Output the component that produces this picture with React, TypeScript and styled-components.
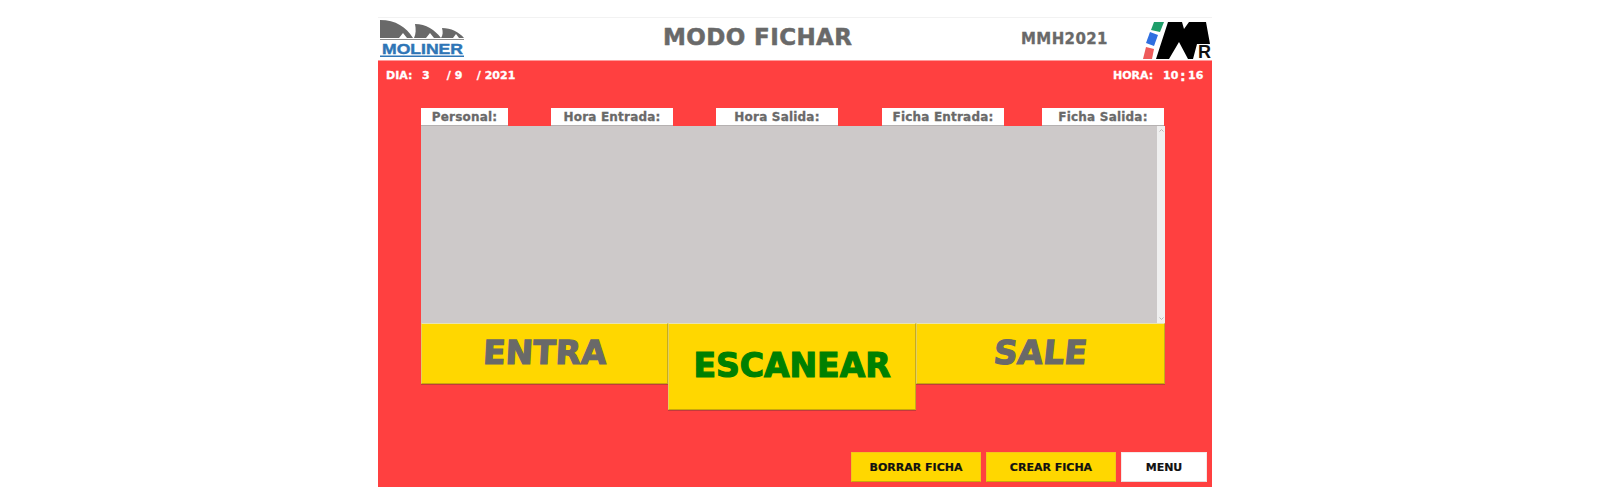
import React, { FunctionComponent } from 'react';
import styled, { createGlobalStyle } from 'styled-components';

const GRAY = '#696969';
const RED = '#ff4040';
const GOLD = '#ffd700';
const FONT = `'DejaVu Sans', Verdana, sans-serif`;

const GlobalStyle = createGlobalStyle`
  html, body {
    margin: 0;
    background: #ffffff;
  }
`;

const Page = styled.div`
  width: 1600px;
  height: 502px;
  padding: 17px 0 0 378px;
  box-sizing: border-box;
  font-family: ${FONT};
  font-weight: 700;
  overflow: hidden;
`;

const Window = styled.div`
  width: 834px;
  height: 470px;
  display: flex;
  flex-direction: column;
`;

const Header = styled.header`
  height: 43px;
  flex: none;
  display: grid;
  grid-template-columns: 285px 358px 122px 69px;
  align-items: center;
  background: #ffffff;
  border-top: 1px solid #f2f2f2;
  box-sizing: border-box;
`;

const Title = styled.h1`
  margin: 0 0 4px;
  font-size: 23px;
  letter-spacing: 0.4px;
  line-height: 26px;
  color: ${GRAY};
  -webkit-text-stroke: 0.5px ${GRAY};
`;

const Code = styled.div`
  font-size: 15px;
  letter-spacing: 0.4px;
  color: ${GRAY};
  margin-bottom: 1px;
  -webkit-text-stroke: 0.3px ${GRAY};
`;

const Body = styled.main`
  flex: 1;
  display: flex;
  flex-direction: column;
  background: ${RED};
  box-shadow: inset 0 1px 0 #ff9a9a;
`;

const InfoRow = styled.div`
  height: 48px;
  flex: none;
  padding: 8px 10px 0 8px;
  box-sizing: border-box;
  display: flex;
  justify-content: space-between;
  color: #ffffff;
  font-size: 11px;
  line-height: 16px;
  -webkit-text-stroke: 0.3px #ffffff;
`;

const Clock = styled.div`
  display: flex;
`;

const Field = styled.span<{ $w: number; $big?: boolean }>`
  width: ${(p) => p.$w}px;
  flex: none;
  white-space: pre;
  font-size: ${(p) => (p.$big ? 14 : 11)}px;
`;

const Table = styled.section`
  width: 744px;
  margin-left: 43px;
`;

const Heads = styled.div`
  display: grid;
  grid-template-columns: 130px 165px 166px 160px 122px;
  height: 18px;
`;

const Head = styled.div<{ $w: number }>`
  width: ${(p) => p.$w}px;
  height: 18px;
  background: #ffffff;
  color: ${GRAY};
  font-size: 12px;
  line-height: 18px;
  letter-spacing: 0.2px;
  text-align: center;
  border-bottom: 1px solid #b5b1b1;
  box-sizing: border-box;
  -webkit-text-stroke: 0.3px ${GRAY};
`;

const List = styled.div`
  height: 197px;
  display: flex;
  justify-content: flex-end;
  background: #cdc9c9;
`;

const ScrollBar = styled.div`
  width: 8px;
  display: flex;
  flex-direction: column;
  justify-content: space-between;
  align-items: center;
  padding: 3px 0;
  box-sizing: border-box;
  background: #f0f0f0;
`;

const ScrollArrow = styled.svg`
  width: 5px;
  height: 3px;
  display: block;
`;

const Actions = styled.div`
  display: flex;
  align-items: flex-start;
`;

const BigButton = styled.button<{ $w: number; $h: number; $pad: number; $green?: boolean; $slant?: number }>`
  width: ${(p) => p.$w}px;
  height: ${(p) => p.$h}px;
  flex: none;
  display: flex;
  justify-content: center;
  align-items: flex-start;
  margin: 0;
  padding: ${(p) => p.$pad}px 0 0;
  box-sizing: border-box;
  background: ${GOLD};
  border: none;
  border-top: 1px solid #e8e4b0;
  border-left: 1px solid #e4d060;
  border-right: 1px solid #c4ab20;
  border-bottom: 1px solid #c9a80c;
  box-shadow: 0 1px 0 #c23b3b;
  font-family: ${FONT};
  font-weight: 700;
  font-size: 33px;
  line-height: 40px;
  color: ${(p) => (p.$green ? '#008000' : GRAY)};
  -webkit-text-stroke: 1.2px ${(p) => (p.$green ? '#008000' : GRAY)};
  span {
    display: inline-block;
    transform: skewX(${(p) => p.$slant ?? 0}deg);
  }
`;

const Footer = styled.footer`
  margin-top: auto;
  padding: 0 5px 5px 0;
  display: flex;
  justify-content: flex-end;
  gap: 5px;
`;

const SmallButton = styled.button<{ $w: number; $white?: boolean }>`
  width: ${(p) => p.$w}px;
  height: 30px;
  margin: 0;
  padding: 0;
  box-sizing: border-box;
  background: ${(p) => (p.$white ? '#ffffff' : GOLD)};
  border: 1px solid ${(p) => (p.$white ? '#f4e9e9' : '#f2c51c')};
  border-bottom-color: ${(p) => (p.$white ? '#e4dcdc' : '#c9a80c')};
  font-family: ${FONT};
  font-weight: 700;
  font-size: 11px;
  color: #111111;
  -webkit-text-stroke: 0.2px #111111;
`;

const Logo = styled.svg`
  display: block;
  width: 86px;
  height: 42px;
`;

const Mark = styled.svg`
  display: block;
  width: 69px;
  height: 42px;
`;

const MolinerLogo: FunctionComponent = () => (
  <Logo viewBox="0 0 86 42">
    <path fill="#696969" d="M2 2 C18 2 28 9 35 20 L29 20 L25 15 L21 20 L2 20 Z" />
    <path fill="#696969" d="M37 6 C48 6 57 12 63 20 L56 20 L52 15 L48 20 L36 20 C38 16 38 11 37 6 Z" />
    <path fill="#696969" d="M64 10 C73 10 81 14 86 20 L81 20 L78 16 L75 20 L63 20 C65 17 65 14 64 10 Z" />
    <rect x="2" y="21" width="84" height="1" fill="#8c8c8c" />
    <text x="4" y="36" fontFamily="'Liberation Sans', sans-serif" fontWeight="700" fontSize="14" fill="#2e75b6" stroke="#2e75b6" strokeWidth="0.4" textLength="81" lengthAdjust="spacingAndGlyphs">
      MOLINER
    </text>
    <rect x="2" y="37.5" width="84" height="1.5" fill="#2e75b6" />
  </Logo>
);

const MrLogo: FunctionComponent = () => (
  <Mark viewBox="0 0 69 42">
    <polygon fill="#1e9e6a" points="11,4 21,4 17,14 8,12" />
    <polygon fill="#2f6fe0" points="7,14 15,17 11,28 3,25" />
    <polygon fill="#ee5a5a" points="3,29 11,31 9,41 0,41" />
    <polygon fill="#000000" points="13,41 25,4 39,4 41,11 46,4 63,4 67,26 54,26 50,41 45,41 36,24 26,41" />
    <text x="55" y="40" fontFamily="'Liberation Sans', sans-serif" fontWeight="700" fontSize="18" fill="#111111">
      R
    </text>
  </Mark>
);

const App: FunctionComponent = () => (
  <Page>
    <GlobalStyle />
    <Window>
      <Header>
        <MolinerLogo />
        <Title>MODO FICHAR</Title>
        <Code>MMH2021</Code>
        <MrLogo />
      </Header>
      <Body>
        <InfoRow>
          <Clock>
            <Field $w={36}>DIA:</Field>
            <Field $w={21}>3</Field>
            <Field $w={30}> / 9</Field>
            <Field $w={50}> / 2021</Field>
          </Clock>
          <Clock>
            <Field $w={50}>HORA:</Field>
            <Field $w={17}>10</Field>
            <Field $w={8} $big>:</Field>
            <Field $w={14}>16</Field>
          </Clock>
        </InfoRow>
        <Table>
          <Heads>
            <Head $w={87}>Personal:</Head>
            <Head $w={122}>Hora Entrada:</Head>
            <Head $w={122}>Hora Salida:</Head>
            <Head $w={122}>Ficha Entrada:</Head>
            <Head $w={122}>Ficha Salida:</Head>
          </Heads>
          <List>
            <ScrollBar>
              <ScrollArrow viewBox="0 0 5 3">
                <path d="M0.5 2.5 L2.5 0.5 L4.5 2.5" fill="none" stroke="#b8b8b8" />
              </ScrollArrow>
              <ScrollArrow viewBox="0 0 5 3">
                <path d="M0.5 0.5 L2.5 2.5 L4.5 0.5" fill="none" stroke="#b8b8b8" />
              </ScrollArrow>
            </ScrollBar>
          </List>
          <Actions>
            <BigButton $w={247} $h={61} $pad={9} $slant={-3}>
              <span>ENTRA</span>
            </BigButton>
            <BigButton $w={248} $h={87} $pad={22} $green>
              <span>ESCANEAR</span>
            </BigButton>
            <BigButton $w={249} $h={61} $pad={9} $slant={-6}>
              <span>SALE</span>
            </BigButton>
          </Actions>
        </Table>
        <Footer>
          <SmallButton $w={130}>BORRAR FICHA</SmallButton>
          <SmallButton $w={130}>CREAR FICHA</SmallButton>
          <SmallButton $w={86} $white>MENU</SmallButton>
        </Footer>
      </Body>
    </Window>
  </Page>
);

export default App;
